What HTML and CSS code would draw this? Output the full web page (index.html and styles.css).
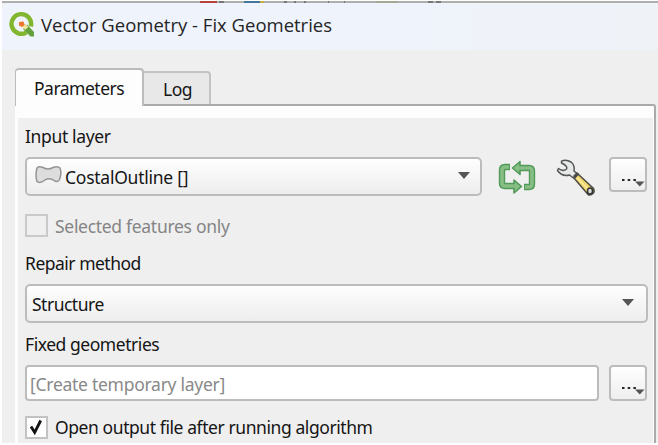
FILE: index.html
```
<!DOCTYPE html>
<html lang="en">
<head>
<meta charset="utf-8">
<title>Vector Geometry - Fix Geometries</title>
<link rel="stylesheet" href="styles.css">
</head>
<body>
<main class="dialog">
  <svg class="backdrop" width="656" height="2" aria-hidden="true">
    <rect width="656" height="2" fill="#adafad"/>
    <rect x="198" width="17" height="2" fill="#b6413b"/><rect x="217" width="5" height="2" fill="#777"/>
    <rect x="242" width="16" height="2" fill="#437799"/><rect x="258" width="4" height="2" fill="#c6ae48"/>
    <path d="M282 1h3M292 1h2M302 1h2M326 1h1M342 1h1M426 1h5M434 1h5" stroke="#777" stroke-width="2"/>
    <rect x="374" width="22" height="2" fill="#a7a795"/>
  </svg>
  <header class="titlebar">
    <svg class="logo" width="26" height="26" viewBox="0 0 26 26">
      <path d="M17.500 20.300A9.800 9.800 0 1 1 21.800 14.500" fill="none" stroke="#83b62f" stroke-width="4.400"/>
      <path d="M14.500 16l3.500-3.500 7 7.500v4.500h-3.500l-7-7z" fill="#65a23b"/>
      <path d="M12.800 12.500l3.500-.5 3 3-3 2.700-3.500-2.700z" fill="#f4e4a0"/>
      <path d="M10 10l4.500-.5 1.200 3.500-2.700 2-3-1.500z" fill="#ed7731"/>
    </svg>
    <h1 class="title">Vector Geometry - Fix Geometries</h1>
  </header>
  <nav class="tabs">
    <div class="tab active"><span class="t-param">Parameters</span></div>
    <div class="tab"><span class="t-log">Log</span></div>
  </nav>
  <section class="panel">
    <div class="form">
      <div class="label"><span class="t-input">Input layer</span></div>
      <div class="row">
        <div class="combo layer">
          <svg class="polygon" width="27" height="20" viewBox="0 0 27 20"><path d="M2 3Q4 .8 8 2.500q5 3 10 0Q23 .7 25 3q2 5-.5 11.500Q23 17.500 20 16q-6-4-10-1-5 4-8 1.500Q0 10 2 3z" fill="#ddd" stroke="#949494" stroke-width="1.500"/></svg>
          <span class="t-layer">CostalOutline []</span>
          <i class="arrow"></i>
        </div>
        <svg class="iterate" width="38" height="34" viewBox="0 0 38 34">
          <g fill="none" stroke-linejoin="round">
            <path d="M12 7H7Q4 7 4 10v13q0 3 3 3h10M26 27h5q3 0 3-3V11q0-3-3-3H21" stroke="#519a58" stroke-width="6.400"/>
            <path d="M22 1.500L14.500 8l7.500 6.500zM16 20l7.500 6.500L16 33z" fill="#86be86" stroke="#519a58" stroke-width="1.600"/>
            <path d="M11 7H7Q4 7 4 10v13q0 3 3 3h11M27 27h4q3 0 3-3V11q0-3-3-3H20" stroke="#86be86" stroke-width="3.600"/>
          </g>
        </svg>
        <svg class="wrench" width="40" height="38" viewBox="0 0 40 38">
          <path d="M18 19l4-4 15.500 14.500q1.500 3-.5 5-2.500 2.500-5 1z" fill="#f0d66c" stroke="#4b4a45" stroke-width="1.500"/>
          <path d="M21 19l12 12" stroke="#fae995" stroke-width="2"/>
          <path d="M5.500 2.200Q10 0 15 3q4 3 3 9l4 3.500-4 4-4.500-3.500Q6 18 1.500 11.500l1-2Q7 13 10.500 10q1.500-3-5-6z" fill="#e5e9e8" stroke="#555" stroke-width="1.500" stroke-linejoin="round"/>
          <path d="M17 17l4-4 2 2-4.500 5z" fill="#4b4b4b"/>
          <ellipse cx="34" cy="32" rx="2.500" ry="3" fill="#ddd" stroke="#333" stroke-width="1.500"/>
        </svg>
        <div class="more"><svg width="34" height="32"><path d="M11 21h2.500m3.200 0h2.500m3.200 0h2.500" stroke="#252530" stroke-width="2"/><path d="M24 22.500h9.500l-4.700 5z" fill="#555"/></svg></div>
      </div>
      <div class="check disabled"><i class="box"></i><span class="t-selected">Selected features only</span></div>
      <div class="label repair"><span class="t-repair">Repair method</span></div>
      <div class="combo method"><span class="t-structure">Structure</span><i class="arrow"></i></div>
      <div class="label fixed"><span class="t-fixed">Fixed geometries</span></div>
      <div class="row">
        <div class="edit"><span class="t-create">[Create temporary layer]</span></div>
        <div class="more tall"><svg width="34" height="32"><path d="M11 21h2.500m3.200 0h2.500m3.200 0h2.500" stroke="#252530" stroke-width="2"/><path d="M24 22.500h9.500l-4.700 5z" fill="#555"/></svg></div>
      </div>
      <div class="check output"><i class="box"><svg width="19" height="19"><path d="M4 8.500l3.700 6 6-12" fill="none" stroke="#111" stroke-width="2.800"/></svg></i><span class="t-open">Open output file after running algorithm</span></div>
    </div>
  </section>
</main>
</body>
</html>
```
FILE: styles.css
```
* { box-sizing: border-box; }
body { margin: 0; background: #fff; overflow: hidden; font: 17.5px/24px "Noto Sans", sans-serif; color: #151515; }
span { white-space: nowrap; }
svg { display: block; flex: none; }
.dialog { width: 656px; height: 442px; margin: 1px 0 0 2px; background: #efefef; overflow: hidden; }
.backdrop { height: 2px; }
.titlebar { height: 47px; display: flex; align-items: flex-start; padding: 9px 0 0 7px; background: linear-gradient(90deg, #eff3fc 45%, #eff2f7); border-radius: 6px 0 0; }
.title { margin: 0 0 0 6px; font: 400 18.5px/25px "Open Sans", sans-serif; color: #252525; white-space: nowrap; }
.tabs { display: flex; align-items: flex-end; height: 54px; padding-left: 13px; }
.tab { height: 33px; width: 67px; border: 2px solid #c3c3c3; border-left: 0; border-bottom: 0; border-radius: 0 4px 0 0; background: #e8e8e8; padding: 4px 0 0 19px; }
.tab.active { width: 129px; height: 38px; border: 2px solid #bbb; border-left-width: 1px; border-bottom: 0; border-radius: 4px 4px 0 0; background: #fdfdfd; margin-bottom: -2px; padding: 6px 0 0 18px; position: relative; }
.panel { width: 641px; height: 340px; margin-left: 13px; border-top: 2px solid #aaa; border-right: 2px solid #aaa; border-radius: 0 3px 0 0; background: #fdfdfd; padding: 12px 1px 0 3px; }
.form { background: #efefef; height: 326px; padding: 7px 6px 0 7px; }
.label { height: 24px; line-height: 22px; }
.row { display: flex; align-items: flex-start; }
.combo { height: 39px; border: 2px solid #bcbcbc; border-radius: 5px; background: linear-gradient(#fefefe, #ededed); display: flex; align-items: center; padding: 0 11px 0 5px; }
.layer { width: 457px; margin-top: 8px; padding-left: 8px; }
.polygon { margin: -4px 3px 0 0; }
.arrow { margin: 0 0 0 auto; border: 6.5px solid transparent; border-top: 7px solid #555; border-bottom: 0; }
.method .arrow { margin-top: -3px; margin-right: 1px; }
.layer .arrow { margin-top: -3px; margin-right: -1px; }
.iterate { margin: 11px 0 0 16px; }
.wrench { margin: 10px 0 0 20px; }
.more { width: 38px; height: 35px; margin: 8px 0 0 13px; border: 2px solid #bcbcbc; border-radius: 4px; background: linear-gradient(#fefefe, #eee); flex: none; }
.check { display: flex; align-items: center; height: 24px; margin-top: 17px; }
.box { width: 23px; height: 23px; border: 2px solid #c3c3c3; margin-right: 7px; background: #fefefe; }
.disabled { color: #858585; }
.disabled .box { background: #efefef; border-color: #c9c9c9; margin-top: -2px; }
.repair { margin-top: 14px; }
.method { margin-top: 8px; width: 623px; }
.fixed { margin-top: 10px; }
.edit { width: 575px; height: 36px; margin-top: 8px; border: 2px solid #bcbcbc; border-radius: 4px; background: #fff; padding: 5px 3px; color: #898989; }
.more.tall { height: 36px; margin-left: 10px; }
.output { margin-top: 14px; }
.t-param { letter-spacing: -.5px; }
.t-log { letter-spacing: -.5px; }
.t-input { letter-spacing: -.35px; }
.t-layer { letter-spacing: -.25px; }
.t-selected { letter-spacing: -.3px; }
.t-repair { letter-spacing: -.5px; }
.t-structure { letter-spacing: -.5px; }
.t-fixed { letter-spacing: -.45px; }
.t-create { letter-spacing: -.27px; }
.t-open { letter-spacing: -.42px; }
```
